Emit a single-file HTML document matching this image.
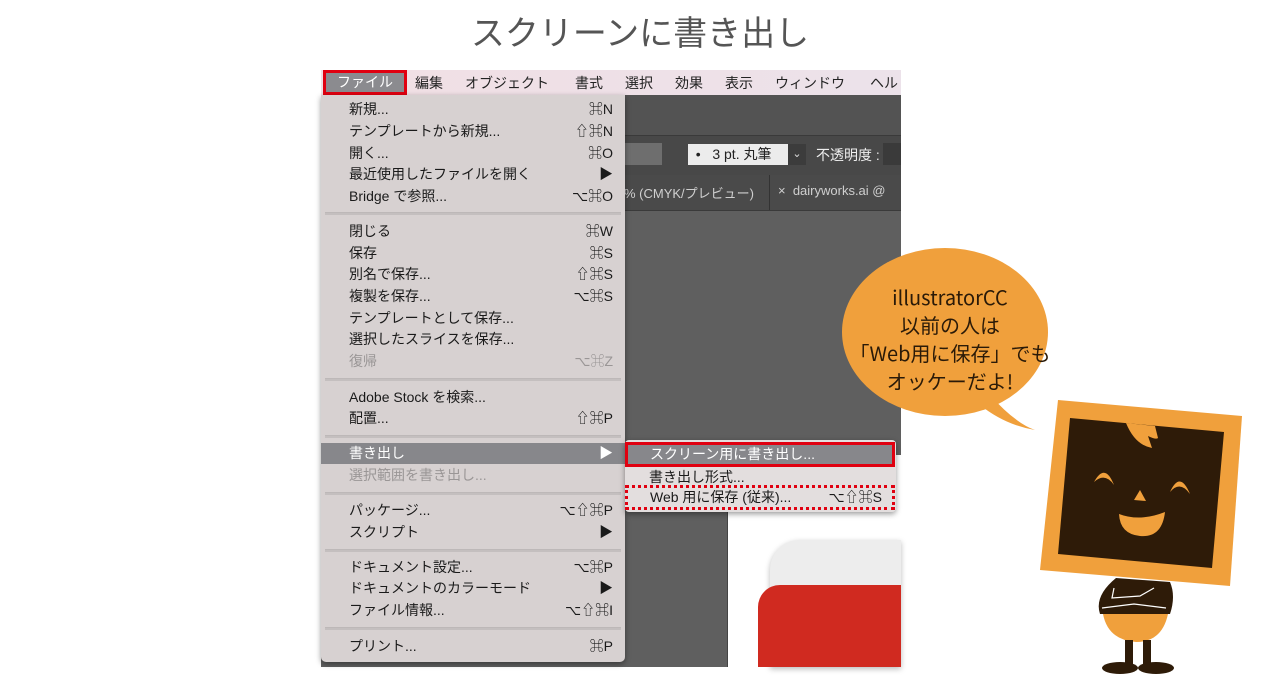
<!DOCTYPE html>
<html><head><meta charset="utf-8"><style>
body{margin:0;width:1280px;height:700px;background:#fff;position:relative;overflow:hidden;font-family:"Liberation Sans","Noto Sans CJK JP",sans-serif}
.a{position:absolute}
.mi{position:absolute;left:349px;font-size:14px;color:#1a1a1a;line-height:20px;white-space:nowrap}
.sc{position:absolute;right:0;width:80px;text-align:right}
.g{color:#9a9696}
.sep{position:absolute;left:325px;width:296px;height:2px;background:#c4bfbf;border-top:1px solid #bdb8b8}
.mb{position:absolute;top:73px;font-size:14px;color:#222;white-space:nowrap}
</style></head><body>
<div class="a" style="left:0;width:1280px;top:6px;text-align:center;font-size:34px;color:#555;font-family:'Noto Sans CJK JP',sans-serif;font-weight:400">スクリーンに書き出し</div>

<!-- app window -->
<div class="a" style="left:321px;top:95px;width:580px;height:572px;background:#5f5f5f"></div>
<div class="a" style="left:321px;top:95px;width:580px;height:40px;background:#535353"></div>
<div class="a" style="left:321px;top:135px;width:580px;height:40px;background:#484848;border-top:1px solid #3a3a3a"></div>
<div class="a" style="left:620px;top:143px;width:42px;height:22px;background:#6e6e6e"></div>
<div class="a" style="left:688px;top:144px;width:100px;height:21px;background:#ececec;font-size:14px;color:#222;line-height:21px">&nbsp;&nbsp;•&nbsp;&nbsp;&nbsp;3 pt. 丸筆</div>
<div class="a" style="left:788px;top:144px;width:18px;height:21px;background:#3c3c3c;color:#ddd;font-size:11px;text-align:center;line-height:21px">⌄</div>
<div class="a" style="left:816px;top:145px;font-size:14px;color:#eee;white-space:nowrap">不透明度 : 1</div>
<div class="a" style="left:883px;top:143px;width:18px;height:22px;background:#3a3a3a"></div>
<div class="a" style="left:321px;top:175px;width:580px;height:35px;background:#4a4a4a;border-bottom:1px solid #3a3a3a"></div>
<div class="a" style="left:769px;top:175px;width:1px;height:35px;background:#333"></div>
<div class="a" style="left:624px;top:183px;font-size:13px;color:#cfcfcf;white-space:nowrap">% (CMYK/プレビュー)</div>
<div class="a" style="left:778px;top:183px;font-size:13px;color:#cfcfcf;white-space:nowrap">×&nbsp;&nbsp;dairyworks.ai @</div>
<div class="a" style="left:727px;top:455px;width:174px;height:212px;background:#fff;border-left:1px solid #444"></div>
<div class="a" style="left:770px;top:540px;width:131px;height:127px;background:#ededed;border-radius:30px 0 0 0;box-shadow:0 2px 6px #bbb"></div>
<div class="a" style="left:758px;top:585px;width:143px;height:82px;background:#d02a20;border-radius:22px 0 0 0"></div>

<!-- menubar -->
<div class="a" style="left:321px;top:70px;width:580px;height:25px;background:linear-gradient(90deg,#f1dfe4,#ece2ea);"></div>
<div class="a" style="left:323px;top:70px;width:84px;height:25px;background:#8b8b8f;border:3px solid #e00010;box-sizing:border-box;color:#fff;font-size:14px;text-align:center;line-height:19px">ファイル</div>
<div class="mb" style="left:415px">編集</div>
<div class="mb" style="left:465px">オブジェクト</div>
<div class="mb" style="left:575px">書式</div>
<div class="mb" style="left:625px">選択</div>
<div class="mb" style="left:675px">効果</div>
<div class="mb" style="left:725px">表示</div>
<div class="mb" style="left:775px">ウィンドウ</div>
<div class="mb" style="left:870px">ヘル</div>

<!-- menu -->
<div class="a" style="left:321px;top:95px;width:304px;height:567px;background:#d7d1d1;border-radius:0 0 5px 5px;box-shadow:0 2px 6px rgba(0,0,0,.4)"></div>
<div class="a" style="left:321px;top:443px;width:304px;height:21px;background:#87878b"></div>
<div style="position:absolute;left:0;top:0;width:613px">
<div class="mi" style="top:99px;width:264px">新規...<span class="sc">⌘N</span></div>
<div class="mi" style="top:121px;width:264px">テンプレートから新規...<span class="sc">⇧⌘N</span></div>
<div class="mi" style="top:143px;width:264px">開く...<span class="sc">⌘O</span></div>
<div class="mi" style="top:164px;width:264px">最近使用したファイルを開く<span class="sc">▶</span></div>
<div class="mi" style="top:186px;width:264px">Bridge で参照...<span class="sc">⌥⌘O</span></div>
<div class="sep" style="top:212px"></div>
<div class="mi" style="top:221px;width:264px">閉じる<span class="sc">⌘W</span></div>
<div class="mi" style="top:243px;width:264px">保存<span class="sc">⌘S</span></div>
<div class="mi" style="top:264px;width:264px">別名で保存...<span class="sc">⇧⌘S</span></div>
<div class="mi" style="top:286px;width:264px">複製を保存...<span class="sc">⌥⌘S</span></div>
<div class="mi" style="top:308px;width:264px">テンプレートとして保存...</div>
<div class="mi" style="top:329px;width:264px">選択したスライスを保存...</div>
<div class="mi g" style="top:351px;width:264px">復帰<span class="sc">⌥⌘Z</span></div>
<div class="sep" style="top:378px"></div>
<div class="mi" style="top:387px;width:264px">Adobe Stock を検索...</div>
<div class="mi" style="top:408px;width:264px">配置...<span class="sc">⇧⌘P</span></div>
<div class="sep" style="top:435px"></div>
<div class="mi" style="top:443px;width:264px;color:#fff">書き出し<span class="sc">▶</span></div>
<div class="mi g" style="top:465px;width:264px">選択範囲を書き出し...</div>
<div class="sep" style="top:492px"></div>
<div class="mi" style="top:500px;width:264px">パッケージ...<span class="sc">⌥⇧⌘P</span></div>
<div class="mi" style="top:522px;width:264px">スクリプト<span class="sc">▶</span></div>
<div class="sep" style="top:549px"></div>
<div class="mi" style="top:557px;width:264px">ドキュメント設定...<span class="sc">⌥⌘P</span></div>
<div class="mi" style="top:578px;width:264px">ドキュメントのカラーモード<span class="sc">▶</span></div>
<div class="mi" style="top:600px;width:264px">ファイル情報...<span class="sc">⌥⇧⌘I</span></div>
<div class="sep" style="top:627px"></div>
<div class="mi" style="top:636px;width:264px">プリント...<span class="sc">⌘P</span></div>
</div>

<!-- submenu -->
<div class="a" style="left:625px;top:440px;width:271px;height:72px;background:#e3dede;border-radius:4px;box-shadow:0 2px 6px rgba(0,0,0,.4)"></div>
<div class="a" style="left:625px;top:442px;width:270px;height:25px;background:#87878b;border:3px solid #e00010;box-sizing:border-box;color:#fff;font-size:14px;line-height:19px;padding-left:22px">スクリーン用に書き出し...</div>
<div class="a" style="left:649px;top:467px;font-size:14px;color:#1a1a1a">書き出し形式...</div>
<div class="a" style="left:625px;top:485px;width:270px;height:25px;border:3px dotted #e00010;box-sizing:border-box;font-size:14px;color:#1a1a1a;line-height:19px;padding-left:22px">Web 用に保存 (従来)...<span style="position:absolute;right:10px">⌥⇧⌘S</span></div>

<!-- bubble -->
<svg class="a" style="left:830px;top:245px" width="220" height="195">
<path d="M160 150 Q185 178 205 185 Q175 180 150 160 Z" fill="#f0a03c"/>
<ellipse cx="115" cy="87" rx="103" ry="84" fill="#f0a03c"/>
</svg>
<div class="a" style="left:840px;top:283px;width:220px;text-align:center;font-size:20px;line-height:28px;color:#2a1a08;font-family:'Noto Sans CJK JP',sans-serif">illustratorCC<br>以前の人は<br>「Web用に保存」でも<br>オッケーだよ!</div>

<!-- character -->
<svg class="a" style="left:1030px;top:390px" width="230" height="290">
<polygon points="28,10 212,26 200,196 10,180" fill="#f0a03c"/>
<polygon points="40,28 194,42 182,178 28,164" fill="#2e1b08"/>
<path d="M96 33 Q105 55 122 58 L118 46 Q126 50 128 48 L125 36 Z" fill="#f0a03c"/>
<path d="M64 92 Q75 72 84 95 Q75 82 64 92Z" fill="#f0a03c"/>
<path d="M140 102 Q150 80 160 104 Q150 90 140 102Z" fill="#f0a03c"/>
<polygon points="110,100 116,111 104,110" fill="#f0a03c"/>
<path d="M89 124 Q110 132 135 122 Q132 148 110 146 Q90 144 89 124Z" fill="#f0a03c"/>
<path d="M86 188 L140 192 Q146 206 140 224 L70 224 Q64 206 86 188Z" fill="#2e1b08"/>
<path d="M73 224 L138 224 Q132 252 106 252 Q78 250 73 224Z" fill="#f0a03c"/>
<path d="M72 218 L104 214 L136 218 M84 198 L82 208 L110 206 L124 198" stroke="#fff" stroke-width="1.2" fill="none"/>
<rect x="95" y="250" width="8" height="28" fill="#2e1b08"/>
<rect x="113" y="250" width="8" height="28" fill="#2e1b08"/>
<ellipse cx="90" cy="278" rx="18" ry="6" fill="#2e1b08"/>
<ellipse cx="126" cy="278" rx="18" ry="6" fill="#2e1b08"/>
</svg>
</body></html>
